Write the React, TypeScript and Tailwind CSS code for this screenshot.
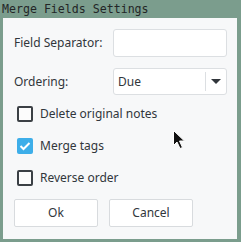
import React from "react";

function CheckRow({ label, checked }: { label: string; checked?: boolean }) {
  return (
    <div className="flex items-center h-[32px]">
      {checked ? (
        <div className="ml-[3px] w-[16px] h-[16px] rounded-[2px] bg-[#3daee9] flex items-center justify-center">
          <svg width="12" height="10" viewBox="0 0 12 10">
            <path d="M1.5 5 L4.5 8 L10.5 2" stroke="#ffffff" strokeWidth="2" fill="none" />
          </svg>
        </div>
      ) : (
        <div className="ml-[3px] w-[16px] h-[16px] rounded-[2px] border-2 border-[#3b4045] bg-[#fcfcfc]" />
      )}
      <span className="ml-[7px]">{label}</span>
    </div>
  );
}

export default function App() {
  return (
    <div className="relative w-[241px] h-[242px] bg-[#7b9d8d] overflow-hidden font-['Noto_Sans',sans-serif] text-[12px] text-[#31363b]">
      <div className="h-[18px] pl-[2px] pt-[2px] leading-[14px] font-['DejaVu_Sans_Mono',monospace] text-[11.6px] text-[#232627]">
        Merge Fields Settings
      </div>
      <div className="ml-[3px] w-[234px] h-[221px] bg-[#f7f8f9] pl-[11px] pr-[10px] pt-[11px] flex flex-col">
        <div className="flex items-center h-[28px]">
          <span className="w-[99px]">Field Separator:</span>
          <div className="flex-1 h-full bg-white border border-[#dcdfe2] rounded-[3px]" />
        </div>
        <div className="flex items-center h-[27px] mt-[11px]">
          <span className="w-[99px]">Ordering:</span>
          <div className="flex-1 h-full bg-white border border-[#dcdfe2] rounded-[3px] flex items-center">
            <span className="flex-1 pl-[4px]">Due</span>
            <div className="w-[21px] h-[19px] border-l border-[#dcdfe2] flex items-center justify-center">
              <svg width="10" height="5" viewBox="0 0 10 5">
                <path d="M0 0 L10 0 L5 5 Z" fill="#31363b" />
              </svg>
            </div>
          </div>
        </div>
        <div className="mt-[3px]">
          <CheckRow label="Delete original notes" />
          <CheckRow label="Merge tags" checked />
          <CheckRow label="Reverse order" />
        </div>
        <div className="flex gap-[11px] mt-[5px]">
          <button className="w-[84px] h-[28px] bg-white border border-[#d8dbde] rounded-[2px]">Ok</button>
          <button className="w-[84px] h-[28px] bg-white border border-[#d8dbde] rounded-[2px]">Cancel</button>
        </div>
      </div>
      <svg className="absolute left-[172px] top-[129px]" width="16" height="22" viewBox="0 0 16 22">
        <path d="M1.5 1.5 L1.5 16.5 L5 13 L8 19.5 L10.5 18.5 L7.5 12 L12.5 12 Z" fill="#111" stroke="#fff" strokeWidth="1" />
      </svg>
    </div>
  );
}
